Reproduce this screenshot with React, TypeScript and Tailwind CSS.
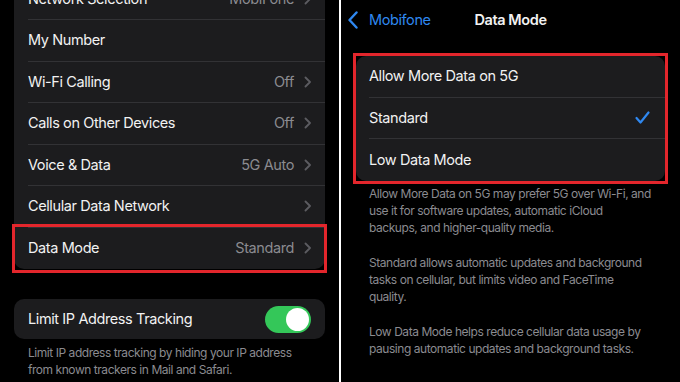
import React from 'react'

const Chevron = () => (
  <svg width="7" height="12" viewBox="0 0 7 12" fill="none">
    <path d="M1.5 1.5l4.5 4.5-4.5 4.5" stroke="#5c5c61" strokeWidth="1.8" strokeLinecap="round" strokeLinejoin="round" />
  </svg>
)

const Toggle = () => (
  <div className="w-[46px] h-[27px] rounded-full bg-[#34c759] flex items-center justify-end p-[2px]">
    <div className="w-[23px] h-[23px] rounded-full bg-white" />
  </div>
)

const RedBox = ({ className }: { className: string }) => (
  <div className={`absolute border-[3px] border-[#e3262c] pointer-events-none ${className}`} />
)

const leftRows = [
  { label: 'Network Selection', value: 'MobiFone' },
  { label: 'My Number', value: '', noChevron: true },
  { label: 'Wi-Fi Calling', value: 'Off' },
  { label: 'Calls on Other Devices', value: 'Off' },
  { label: 'Voice & Data', value: '5G Auto' },
  { label: 'Cellular Data Network', value: '' },
  { label: 'Data Mode', value: 'Standard', boxed: true },
]

const modes = ['Allow More Data on 5G', 'Standard', 'Low Data Mode']

const notes = [
  ['Allow More Data on 5G may prefer 5G over Wi-Fi, and', 'use it for software updates, automatic iCloud', 'backups, and higher-quality media.'],
  ['Standard allows automatic updates and background', 'tasks on cellular, but limits video and FaceTime', 'quality.'],
  ['Low Data Mode helps reduce cellular data usage by', 'pausing automatic updates and background tasks.'],
]

export default function App() {
  return (
    <div className="flex w-[680px] h-[382px] overflow-hidden bg-black text-[#f2f2f2] font-['Inter','Liberation_Sans',sans-serif]">
      {/* left screen */}
      <div className="w-[339px] shrink-0 px-[14px]">
        <div className="-mt-[21.5px] rounded-[10px] bg-[#1c1c1e]">
          {leftRows.map((r, i) => (
            <div key={r.label} className="relative flex h-[41.5px] pl-[14px]">
              <div
                className={`flex flex-1 items-center justify-between pr-[14px] ${
                  i < leftRows.length - 1 ? 'border-b border-[#323235]' : ''
                }`}
              >
                <span className="text-[14.5px] tracking-[-0.4px]">{r.label}</span>
                {!r.noChevron && (
                  <div className="flex items-center gap-[10px]">
                    {r.value && <span className="text-[14.5px] tracking-[-0.4px] text-[#8b8b90]">{r.value}</span>}
                    <Chevron />
                  </div>
                )}
              </div>
              {r.boxed && <RedBox className="-left-[2px] -right-[2px] -top-[4px] -bottom-[4px]" />}
            </div>
          ))}
        </div>

        <div className="mt-[30px] flex h-[40px] items-center justify-between rounded-[10px] bg-[#1c1c1e] pl-[14px] pr-[14px]">
          <span className="text-[14.5px] tracking-[-0.4px]">Limit IP Address Tracking</span>
          <Toggle />
        </div>
        <div className="mt-[5px] pl-[14px] text-[12px] leading-[17px] tracking-[-0.45px] text-[#8b8b90]">
          <div>Limit IP address tracking by hiding your IP address</div>
          <div>from known trackers in Mail and Safari.</div>
        </div>
      </div>

      {/* divider */}
      <div className="w-[2px] shrink-0 bg-white" />

      {/* right screen */}
      <div className="flex-1">
        <div className="grid h-[40px] grid-cols-[1fr_auto_1fr] items-center">
          <div className="flex items-center gap-[11px] pl-[7px] text-[#2f88f0]">
            <svg width="10" height="18" viewBox="0 0 10 18" fill="none">
              <path d="M8.5 1.5L1.5 9l7 7.5" stroke="#2f88f0" strokeWidth="2.4" strokeLinecap="round" strokeLinejoin="round" />
            </svg>
            <span className="text-[14.5px] tracking-[-0.4px]">Mobifone</span>
          </div>
          <span className="text-[14.5px] font-semibold tracking-[-0.4px]">Data Mode</span>
          <div />
        </div>

        <div className="relative mx-[15px] mt-[16px] rounded-[10px] bg-[#1c1c1e]">
          {modes.map((m, i) => (
            <div key={m} className="flex h-[41.5px] pl-[13px]">
              <div
                className={`flex flex-1 items-center justify-between pr-[15px] ${
                  i < modes.length - 1 ? 'border-b border-[#323235]' : ''
                }`}
              >
                <span className="text-[14.5px] tracking-[-0.4px]">{m}</span>
                {m === 'Standard' && (
                  <svg width="15" height="13" viewBox="0 0 15 13" fill="none">
                    <path d="M1.5 7l4 4.5L13.5 1.5" stroke="#2f88f0" strokeWidth="2.2" strokeLinecap="round" strokeLinejoin="round" />
                  </svg>
                )}
              </div>
            </div>
          ))}
          <RedBox className="-inset-[3px]" />
        </div>

        <div className="mt-[4px] flex flex-col gap-[18px] pl-[28px] text-[12px] leading-[17px] tracking-[-0.45px] text-[#8b8b90]">
          {notes.map((p, i) => (
            <div key={i}>
              {p.map((l) => (
                <div key={l}>{l}</div>
              ))}
            </div>
          ))}
        </div>
      </div>
    </div>
  )
}
